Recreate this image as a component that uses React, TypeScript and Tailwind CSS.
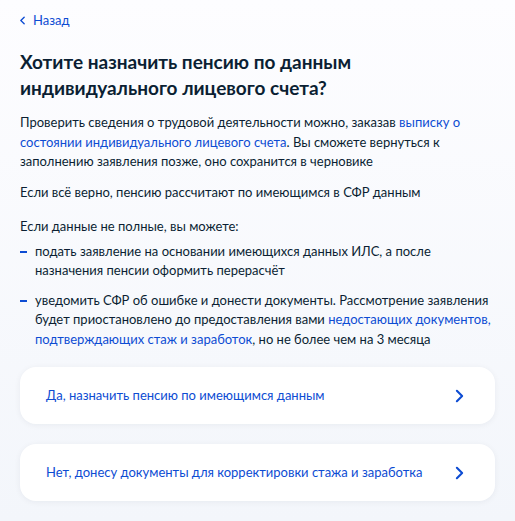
import React from 'react';

const Chevron = ({ className }: { className?: string }) => (
  <svg viewBox="0 0 10 16" className={className} fill="none">
    <path d="M2 2l6 6-6 6" stroke="#0d4cd3" strokeWidth="2.4" strokeLinecap="round" strokeLinejoin="round" />
  </svg>
);

const Bullet = () => <span className="mt-[9px] block h-[2px] w-[7px] shrink-0 bg-[#0d4cd3]" />;

export default function App() {
  const options = [
    'Да, назначить пенсию по имеющимся данным',
    'Нет, донесу документы для корректировки стажа и заработка',
  ];

  return (
    <div
      className="min-h-[521px] w-full bg-gradient-to-b from-[#fdfdff] to-[#f3f6fb] px-5 pt-[11px] pb-5 text-[#0b1f33]"
      style={{ fontFamily: 'Lato, "Noto Sans", sans-serif' }}
    >
      {/* Back link */}
      <a href="#" className="flex items-center gap-[8px] text-[13px] leading-[18px] text-[#0d4cd3]">
        <svg viewBox="0 0 6 10" className="h-[9px] w-[5px]" fill="none">
          <path d="M5 1L1 5l4 4" stroke="#0d4cd3" strokeWidth="1.6" strokeLinecap="round" strokeLinejoin="round" />
        </svg>
        Назад
      </a>

      <h1 className="mt-[20px] text-[19px] font-bold leading-[26px]">
        Хотите назначить пенсию по данным индивидуального лицевого счета?
      </h1>

      <div className="mt-[12px] text-[13px] leading-[19.5px]">
        <p>
          Проверить сведения о трудовой деятельности можно, заказав{' '}
          <a href="#" className="text-[#0d4cd3]">выписку о состоянии индивидуального лицевого счета</a>. Вы сможете
          вернуться к заполнению заявления позже, оно сохранится в черновике
        </p>
        <p className="mt-[11px]">Если всё верно, пенсию рассчитают по имеющимся в СФР данным</p>
        <p className="mt-[15px]">Если данные не полные, вы можете:</p>
        <ul className="mt-[5px] flex flex-col gap-[10px]">
          <li className="flex gap-[8px]">
            <Bullet />
            <span>подать заявление на основании имеющихся данных ИЛС, а после назначения пенсии оформить перерасчёт</span>
          </li>
          <li className="flex gap-[8px]">
            <Bullet />
            <span>
              уведомить СФР об ошибке и донести документы. Рассмотрение заявления будет приостановлено до
              предоставления вами{' '}
              <a href="#" className="text-[#0d4cd3]">недостающих документов, подтверждающих стаж и заработок</a>, но не
              более чем на 3 месяца
            </span>
          </li>
        </ul>
      </div>

      <div className="mt-[18px] flex flex-col gap-5">
        {options.map((label) => (
          <button
            key={label}
            className="flex h-[57px] w-full items-center justify-between rounded-2xl bg-white pr-[31px] pl-[26px] text-left text-[13px] text-[#0d4cd3] shadow-[0_1px_6px_rgba(11,31,51,0.06)]"
          >
            <span>{label}</span>
            <Chevron className="h-[14px] w-[9px]" />
          </button>
        ))}
      </div>
    </div>
  );
}
